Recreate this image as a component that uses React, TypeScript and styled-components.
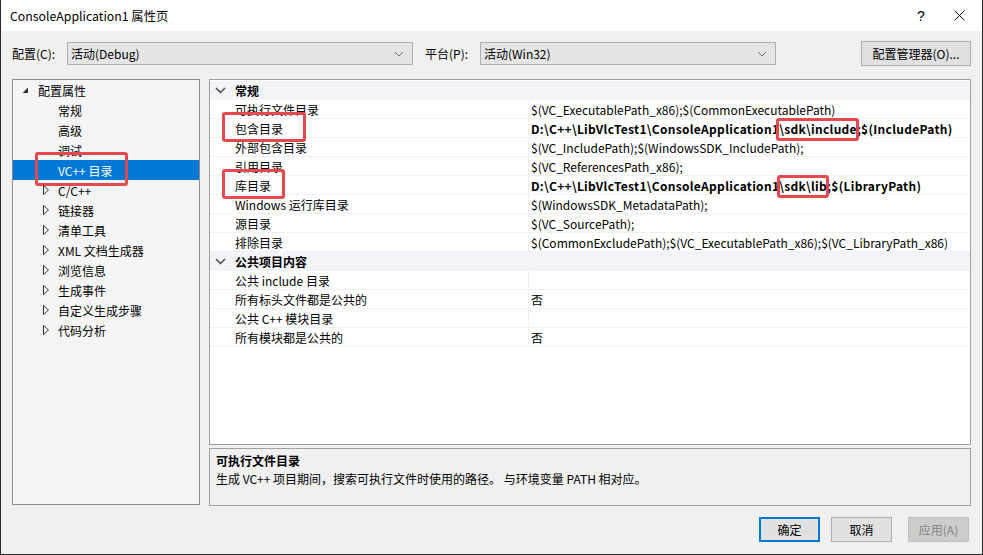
import styled, { createGlobalStyle } from 'styled-components';

const GlobalStyle = createGlobalStyle`
  html, body {
    margin: 0;
    padding: 0;
    background: #1e1e1e;
  }
  body {
    font-family: "Noto Sans CJK SC", "Noto Sans", sans-serif;
    font-size: 12px;
    color: #000;
  }
`;

const Window = styled.div`
  width: 983px;
  height: 555px;
  box-sizing: border-box;
  border: 1px solid #2b2b2b;
  border-top: none;
  background: #f0f0f0;
  display: flex;
  flex-direction: column;
  overflow: hidden;
`;

const TitleBar = styled.div`
  height: 31px;
  background: #fff;
  display: flex;
  align-items: center;
  padding-left: 9px;
  font-size: 12.3px;
`;

const Title = styled.div`
  flex: 1;
`;

const TitleButton = styled.div`
  width: 38px;
  height: 31px;
  display: flex;
  align-items: center;
  justify-content: center;
  font-size: 14px;
  font-family: "Liberation Sans", sans-serif;
`;

const Content = styled.div`
  flex: 1;
  display: flex;
  flex-direction: column;
  padding: 10px 11px 0 11px;
`;

const Toolbar = styled.div`
  display: flex;
  align-items: center;
  height: 25px;
`;

const Label = styled.span<{ $ml?: number }>`
  margin-left: ${(p) => p.$ml ?? 0}px;
  width: 55px;
  white-space: nowrap;
`;

const Combo = styled.div<{ $w: number }>`
  width: ${(p) => p.$w}px;
  height: 23px;
  box-sizing: border-box;
  border: 1px solid #adadad;
  background: #e5e5e5;
  display: flex;
  align-items: center;
  padding: 0 8px 0 3px;
  justify-content: space-between;
`;

const Button = styled.div<{ $primary?: boolean; $disabled?: boolean; $w?: number }>`
  width: ${(p) => p.$w ?? 61}px;
  height: 25px;
  box-sizing: border-box;
  display: flex;
  align-items: center;
  justify-content: center;
  background: ${(p) => (p.$disabled ? '#cccccc' : '#e1e1e1')};
  color: ${(p) => (p.$disabled ? '#838383' : '#000')};
  border: ${(p) =>
    p.$primary ? '2px solid #0078d7' : p.$disabled ? '1px solid #bfbfbf' : '1px solid #adadad'};
  white-space: nowrap;
`;

const Main = styled.div`
  display: flex;
  gap: 9px;
  margin-top: 13px;
`;

const Tree = styled.div`
  width: 188px;
  height: 426px;
  box-sizing: border-box;
  border: 1px solid #8c8c94;
  background: #f5f5f5;
`;

const TreeRow = styled.div<{ $indent: number; $selected?: boolean }>`
  height: 20px;
  display: flex;
  align-items: center;
  padding-left: ${(p) => p.$indent}px;
  background: ${(p) => (p.$selected ? '#0078d7' : 'transparent')};
  color: ${(p) => (p.$selected ? '#fff' : '#000')};
  white-space: nowrap;
  position: relative;
`;

const TreeArrow = styled.span`
  width: 12px;
  display: inline-flex;
  align-items: center;
`;

const RightCol = styled.div`
  flex: 1;
  display: flex;
  flex-direction: column;
  gap: 3px;
`;

const Grid = styled.div`
  height: 366px;
  box-sizing: border-box;
  border: 1px solid #a0a0a0;
  background: #fff;
  padding-top: 1px;
`;

const GridRow = styled.div<{ $header?: boolean }>`
  height: 19px;
  box-sizing: border-box;
  display: flex;
  align-items: center;
  background: ${(p) => (p.$header ? '#f3f4f8' : '#fff')};
  border-bottom: 1px solid ${(p) => (p.$header ? '#f3f4f8' : '#f0f1f5')};
  white-space: nowrap;
`;

const Gutter = styled.div`
  width: 25px;
  box-sizing: border-box;
  padding-right: 4px;
  display: flex;
  align-items: center;
  justify-content: center;
`;

const NameCell = styled.div<{ $bold?: boolean }>`
  width: 293px;
  font-weight: ${(p) => (p.$bold ? 700 : 400)};
  position: relative;
`;

const ValueCell = styled.div<{ $bold?: boolean }>`
  flex: 1;
  height: 100%;
  display: flex;
  align-items: center;
  border-left: 1px solid #f0f1f5;
  padding-left: 2px;
  font-weight: ${(p) => (p.$bold ? 700 : 400)};
  letter-spacing: ${(p) => (p.$bold ? '0.3px' : '0')};
`;

const Marked = styled.span<{ $pl?: number; $pr?: number }>`
  position: relative;
  &::after {
    content: '';
    position: absolute;
    left: -${(p) => p.$pl ?? 4}px;
    right: -${(p) => p.$pr ?? 4}px;
    top: -2px;
    bottom: -4px;
    border: 3px solid #e5484d;
    border-radius: 3px;
  }
`;

const Description = styled.div`
  height: 58px;
  box-sizing: border-box;
  border: 1px solid #a0a0a0;
  padding: 3px 6px;
  display: flex;
  flex-direction: column;
  gap: 1px;
`;

const DescTitle = styled.div`
  font-weight: 700;
`;

const Footer = styled.div`
  display: flex;
  justify-content: flex-end;
  margin-top: 11px;
  padding-right: 2px;
`;

const Spacer = styled.div<{ $w: number }>`
  width: ${(p) => p.$w}px;
  flex-shrink: 0;
`;

const ChevronDown = () => (
  <svg width="10" height="6" viewBox="0 0 10 6">
    <polyline points="1,1 5,5 9,1" fill="none" stroke="#6d6d6d" strokeWidth="1" />
  </svg>
);

const GridChevron = () => (
  <svg width="11" height="7" viewBox="0 0 11 7">
    <polyline points="1,1 5.5,5.5 10,1" fill="none" stroke="#444" strokeWidth="1.4" />
  </svg>
);

const Expanded = () => (
  <svg width="7" height="7" viewBox="0 0 7 7">
    <polygon points="6,0.5 6,6 0.5,6" fill="#333" />
  </svg>
);

const Collapsed = () => (
  <svg width="6" height="10" viewBox="0 0 6 10">
    <polygon points="0.5,0.5 5.5,5 0.5,9.5" fill="none" stroke="#333" strokeWidth="1" />
  </svg>
);

const treeItems: { label: string; expandable?: boolean; selected?: boolean; marked?: boolean }[] = [
  { label: '常规' },
  { label: '高级' },
  { label: '调试' },
  { label: 'VC++ 目录', selected: true, marked: true },
  { label: 'C/C++', expandable: true },
  { label: '链接器', expandable: true },
  { label: '清单工具', expandable: true },
  { label: 'XML 文档生成器', expandable: true },
  { label: '浏览信息', expandable: true },
  { label: '生成事件', expandable: true },
  { label: '自定义生成步骤', expandable: true },
  { label: '代码分析', expandable: true },
];

const TreeMark = styled.span`
  position: absolute;
  left: 22px;
  width: 93px;
  top: -8px;
  bottom: -6px;
  box-sizing: border-box;
  border: 3px solid #e5484d;
  border-radius: 3px;
`;

const NameMark = styled.span<{ $w: number }>`
  position: absolute;
  left: -13px;
  width: ${(p) => p.$w}px;
  top: -8px;
  bottom: -5px;
  box-sizing: border-box;
  border: 3px solid #e5484d;
  border-radius: 3px;
`;

type Row = { name: string; value?: React.ReactNode; bold?: boolean; mark?: number };

const general: Row[] = [
  { name: '可执行文件目录', value: '$(VC_ExecutablePath_x86);$(CommonExecutablePath)' },
  {
    name: '包含目录',
    mark: 84,
    bold: true,
    value: (
      <>
        D:\C++\LibVlcTest1\ConsoleApplication1<Marked $pl={3} $pr={2}>\sdk\include</Marked>;$(IncludePath)
      </>
    ),
  },
  { name: '外部包含目录', value: '$(VC_IncludePath);$(WindowsSDK_IncludePath);' },
  { name: '引用目录', value: '$(VC_ReferencesPath_x86);' },
  {
    name: '库目录',
    mark: 63,
    bold: true,
    value: (
      <>
        D:\C++\LibVlcTest1\ConsoleApplication1<Marked $pl={2} $pr={2}>\sdk\lib</Marked>;$(LibraryPath)
      </>
    ),
  },
  { name: 'Windows 运行库目录', value: '$(WindowsSDK_MetadataPath);' },
  { name: '源目录', value: '$(VC_SourcePath);' },
  { name: '排除目录', value: '$(CommonExcludePath);$(VC_ExecutablePath_x86);$(VC_LibraryPath_x86)' },
];

const common: Row[] = [
  { name: '公共 include 目录', value: '' },
  { name: '所有标头文件都是公共的', value: '否' },
  { name: '公共 C++ 模块目录', value: '' },
  { name: '所有模块都是公共的', value: '否' },
];

const Section = ({ title, rows }: { title: string; rows: Row[] }) => (
  <>
    <GridRow $header>
      <Gutter>
        <GridChevron />
      </Gutter>
      <NameCell $bold>{title}</NameCell>
    </GridRow>
    {rows.map((r) => (
      <GridRow key={r.name}>
        <Gutter />
        <NameCell>
          {r.mark && <NameMark $w={r.mark} />}
          {r.name}
        </NameCell>
        <ValueCell $bold={r.bold}>{r.value}</ValueCell>
      </GridRow>
    ))}
  </>
);

export default function App() {
  return (
    <>
      <GlobalStyle />
      <Window>
        <TitleBar>
          <Title>ConsoleApplication1 属性页</Title>
          <TitleButton>?</TitleButton>
          <TitleButton>
            <svg width="11" height="11" viewBox="0 0 11 11">
              <path d="M0.5 0.5 L10.5 10.5 M10.5 0.5 L0.5 10.5" stroke="#111" strokeWidth="1" />
            </svg>
          </TitleButton>
          <Spacer $w={4} />
        </TitleBar>
        <Content>
          <Toolbar>
            <Label>配置(C):</Label>
            <Combo $w={346}>
              <span>活动(Debug)</span>
              <ChevronDown />
            </Combo>
            <Label $ml={12}>平台(P):</Label>
            <Combo $w={296}>
              <span>活动(Win32)</span>
              <ChevronDown />
            </Combo>
            <Spacer $w={85} />
            <Button $w={110}>配置管理器(O)...</Button>
          </Toolbar>
          <Main>
            <Tree>
              <TreeRow $indent={9}>
                <TreeArrow>
                  <Expanded />
                </TreeArrow>
                <Spacer $w={4} />
                配置属性
              </TreeRow>
              {treeItems.map((t) => (
                <TreeRow key={t.label} $indent={30} $selected={t.selected}>
                  <TreeArrow>{t.expandable && <Collapsed />}</TreeArrow>
                  <Spacer $w={3} />
                  {t.marked && <TreeMark />}
                  {t.label}
                </TreeRow>
              ))}
            </Tree>
            <RightCol>
              <Grid>
                <Section title="常规" rows={general} />
                <Section title="公共项目内容" rows={common} />
              </Grid>
              <Description>
                <DescTitle>可执行文件目录</DescTitle>
                <div>生成 VC++ 项目期间，搜索可执行文件时使用的路径。 与环境变量 PATH 相对应。</div>
              </Description>
            </RightCol>
          </Main>
          <Footer>
            <Button $primary>确定</Button>
            <Spacer $w={11} />
            <Button>取消</Button>
            <Spacer $w={16} />
            <Button $disabled>应用(A)</Button>
          </Footer>
        </Content>
      </Window>
    </>
  );
}
